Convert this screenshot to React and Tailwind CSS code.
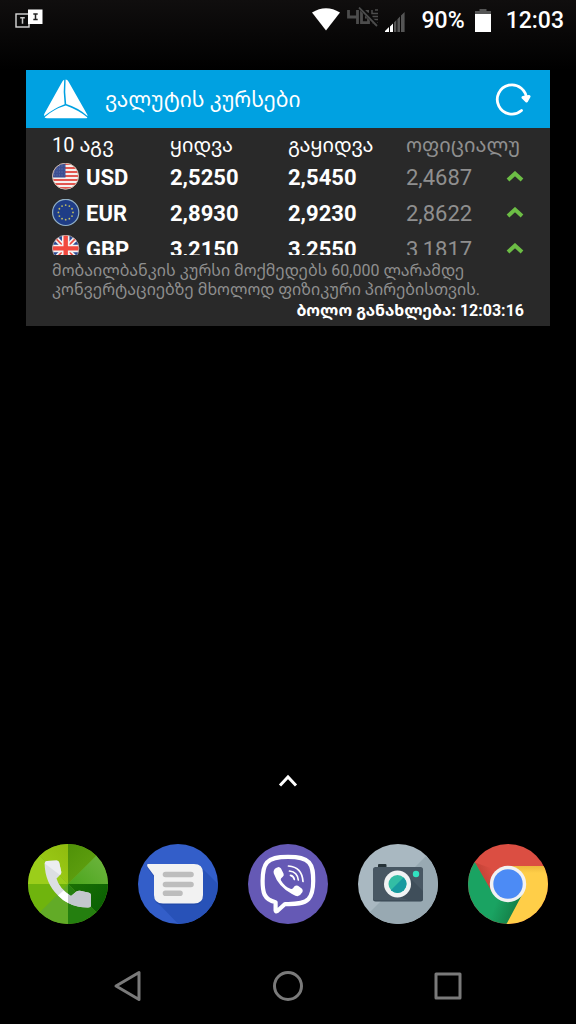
const rates = [
  { code: "USD", Flag: UsFlag, buy: "2,5250", sell: "2,5450", official: "2,4687" },
  { code: "EUR", Flag: EuFlag, buy: "2,8930", sell: "2,9230", official: "2,8622" },
  { code: "GBP", Flag: GbFlag, buy: "3,2150", sell: "3,2550", official: "3,1817" },
];

function UsFlag() {
  return (
    <svg className="size-7 shrink-0" viewBox="0 0 28 28" aria-hidden="true">
      <clipPath id="us"><circle cx="13.5" cy="13.2" r="13" /></clipPath>
      <g clipPath="url(#us)">
        <rect width="28" height="28" fill="#f5f0ee" />
        {[1, 5, 9, 13, 17, 21, 25].map((y) => (
          <rect key={y} y={y - 1} width="28" height="2" fill="#e2564f" />
        ))}
        <rect width="13.5" height="14.5" fill="#3c4f93" />
        {[3, 6, 9, 12].map((y) => (
          <path key={y} d={`M2 ${y}H12.5`} stroke="#6f7fb4" strokeWidth="0.8" strokeDasharray="1 1.5" />
        ))}
      </g>
      <circle cx="13.5" cy="13.2" r="13" fill="none" stroke="#c9b5a8" strokeWidth="1" />
    </svg>
  );
}

function EuFlag() {
  return (
    <svg className="size-7 shrink-0" viewBox="0 0 28 28" aria-hidden="true">
      <circle cx="13.7" cy="13.4" r="13.1" fill="#1f3d86" stroke="#92b1c6" strokeWidth="1.2" />
      {Array.from({ length: 12 }, (_, i) => {
        const a = (i * Math.PI) / 6;
        return <circle key={i} cx={13.7 + 7.3 * Math.cos(a)} cy={13.4 + 7.3 * Math.sin(a)} r="0.9" fill="#c3bf62" />;
      })}
    </svg>
  );
}

function GbFlag() {
  return (
    <svg className="size-7 shrink-0" viewBox="0 0 28 28" aria-hidden="true">
      <clipPath id="gb"><circle cx="13.7" cy="13.4" r="13.2" /></clipPath>
      <g clipPath="url(#gb)">
        <rect width="28" height="28" fill="#2b4a96" />
        <path d="M1.7 1.4L25.7 25.4M25.7 1.4L1.7 25.4" stroke="#f5f2f2" strokeWidth="5" />
        <path d="M1.7 1.4L25.7 25.4M25.7 1.4L1.7 25.4" stroke="#ee4a40" strokeWidth="1.6" />
        <path d="M13.7 0V28M0 13.4H28" stroke="#f5f2f2" strokeWidth="7.5" />
        <path d="M13.7 0V28M0 13.4H28" stroke="#f2493f" strokeWidth="4.4" />
      </g>
      <circle cx="13.7" cy="13.4" r="13.2" fill="none" stroke="#b9a8a4" strokeWidth="0.8" />
    </svg>
  );
}

function StatusBar() {
  return (
    <header className="flex h-10 items-center pt-0.5 pl-[15px] pr-3 text-[23px] font-medium">
      <svg className="mb-1 h-5 w-7" viewBox="0 0 28 20" aria-hidden="true">
        <rect x="1" y="5" width="13" height="13" fill="#0a0a0a" stroke="#d8d8d8" strokeWidth="1.4" />
        <path d="M5.2 8.7H9.8M7.5 8.7V14.7" stroke="#c4c4c4" strokeWidth="1.5" fill="none" />
        <rect x="13" y="0.5" width="14.5" height="14.5" fill="#fff" />
        <path d="M18.3 5H22.7M18.3 10.5H22.7M20.5 5V10.5" stroke="#222" strokeWidth="1.5" fill="none" />
      </svg>
      <svg className="ml-auto mb-1 h-6 w-[30px]" viewBox="0 0 30 24" aria-hidden="true">
        <path d="M1 5.5Q15 -3 29 5.5L15 23.5Z" fill="#fff" />
      </svg>
      <svg className="ml-1.5 mr-1.5 mb-2 h-5 w-8" viewBox="0 0 32 20" aria-hidden="true">
        <g fill="none" stroke="#4c4c4c">
          <path d="M1.5 3V10H10.5M10.5 3V17" strokeWidth="2.8" />
          <path d="M22 4.3H14.5V15.7H21.5V10H18" strokeWidth="2.8" />
          <path d="M25 3V6.5H31M31 9.5H25.5M31 12.5H25.5M31 16H25.5M28 3H31" strokeWidth="1.5" />
          <path d="M12.5 0L31 19" stroke="#0b0b0b" strokeWidth="4" />
          <path d="M12 0.5L30 19" strokeWidth="1.8" />
        </g>
      </svg>
      <svg className="mt-0.5 h-5 w-5" viewBox="0 0 20 20" aria-hidden="true">
        <path d="M0 20V19L4 15V20ZM5 20V14.5L8 11.5V20Z" fill="#fff" />
        <path d="M9 20V10.5L11.4 8V20ZM12.4 20V7.2L15 4.6V20ZM16 20V3.6L19.6 0V20Z" fill="#555" />
      </svg>
      <span className="ml-[17px]">90%</span>
      <svg className="ml-2.5 h-6 w-4" viewBox="0 0 16 24" aria-hidden="true">
        <path d="M4.5 0H11.5V2H16V6H0V2H4.5Z" fill="#555" />
        <rect y="5" width="16" height="18" fill="#fff" />
      </svg>
      <time className="ml-[15px]">12:03</time>
    </header>
  );
}

function RatesWidget() {
  return (
    <section className="mx-[26px] mt-[30px] bg-[#292929]">
      <div className="flex h-[58px] items-center bg-[#00a1e1] pl-[17px] pr-[19px]">
        <svg className="h-10 w-[46px]" viewBox="0 0 46 40" fill="#fff" aria-hidden="true">
          <path d="M21.2 0.8Q20 1.2 19.2 2.8L1.5 34.5Q0.6 36.2 1.3 37Q11 29.5 21.6 25.3Q20 13 21.2 0.8Z" />
          <path d="M22.6 0.6Q24.4 0.6 25.6 2.8L44.2 35.5Q44.8 36.6 44.4 37Q36 29 23.2 25Q21.6 13 22.6 0.6Z" />
          <path d="M22.8 26.6Q11 30 1.6 38.2Q2 39.3 4 39.3H42Q44 39.3 44.4 38.4Q35 31 22.8 26.6Z" />
        </svg>
        <h1 className="ml-4 pt-1 text-[21px]">ვალუტის კურსები</h1>
        <button type="button" aria-label="განახლება" className="ml-auto">
          <svg className="size-9" viewBox="0 0 36 36" fill="none" stroke="#fff" strokeLinecap="round" strokeLinejoin="round">
            <path d="M26.5 29.5A14.6 14.6 0 1 1 31.5 19" strokeWidth="2.8" />
            <path d="M28 16.5L31.5 20L34 15.5Z" strokeWidth="3" fill="#fff" />
          </svg>
        </button>
      </div>

      <div className="px-[26px] pb-[5px]">
        {/* Third row is cut off by the widget height */}
        <div className="h-[127px] overflow-hidden">
          <table className="w-full table-fixed text-left text-[22px]">
            <colgroup>
              <col className="w-1/4" />
              <col className="w-1/4" />
              <col className="w-1/4" />
              <col />
              <col className="w-[18px]" />
            </colgroup>
            <thead>
              <tr className="h-[31px] whitespace-nowrap text-[20px] leading-[27px]">
                <th className="p-0 pt-1 font-normal">10 აგვ</th>
                <th className="p-0 pt-1 font-normal">ყიდვა</th>
                <th className="p-0 pt-1 font-normal">გაყიდვა</th>
                <th colSpan={2} className="p-0 pt-1 font-normal text-[#8f8f8f]">ოფიციალუ</th>
              </tr>
            </thead>
            <tbody>
              {rates.map(({ code, Flag, buy, sell, official }) => (
                <tr key={code} className="h-9 font-bold">
                  <td className="p-0">
                    <div className="flex items-center gap-1.5">
                      <Flag />
                      {code}
                    </div>
                  </td>
                  <td className="p-0">{buy}</td>
                  <td className="p-0">{sell}</td>
                  <td className="p-0 font-normal text-[#8f8f8f]">{official}</td>
                  <td className="p-0">
                    <svg className="h-3 w-[18px]" viewBox="0 0 18 12" aria-hidden="true">
                      <path d="M2 9L9 2.6L16 9" fill="none" stroke="#6cbd45" strokeWidth="4" />
                    </svg>
                  </td>
                </tr>
              ))}
            </tbody>
          </table>
        </div>
        <p className="mt-[6px] text-base leading-[19px] text-[#8f8f8f]">
          მობაილბანკის კურსი მოქმედებს 60,000 ლარამდე
          <br />
          კონვერტაციებზე მხოლოდ ფიზიკური პირებისთვის.
        </p>
        <p className="mt-[2px] text-right text-base leading-5 font-bold">ბოლო განახლება: 12:03:16</p>
      </div>
    </section>
  );
}

function PhoneIcon() {
  return (
    <svg className="size-20" viewBox="0 0 80 80" aria-hidden="true">
      <defs>
        <clipPath id="phone"><circle cx="40" cy="40" r="40" /></clipPath>
        <linearGradient id="p1" x1="1" y1="0" x2="0" y2="1"><stop stopColor="#8fbb0e" /><stop offset="1" stopColor="#a3d41c" /></linearGradient>
        <linearGradient id="p2" x1="0" y1="0" x2="1" y2="1"><stop stopColor="#4f9108" /><stop offset="1" stopColor="#69a814" /></linearGradient>
        <linearGradient id="p3" x1="0" y1="1" x2="1" y2="0"><stop stopColor="#4aa51c" /><stop offset="1" stopColor="#76b846" /></linearGradient>
        <linearGradient id="p4" x1="0" y1="0" x2="1" y2="1"><stop stopColor="#1b6f05" /><stop offset="1" stopColor="#045c02" /></linearGradient>
      </defs>
      <g clipPath="url(#phone)">
        <rect width="80" height="80" fill="#6aa81c" />
        <path d="M40 40L0 0H40Z" fill="url(#p1)" />
        <path d="M40 40V0H80Z" fill="url(#p2)" />
        <path d="M40 40L80 0V40Z" fill="url(#p3)" />
        <path d="M40 40H80V80Z" fill="url(#p4)" />
        <path d="M40 40L80 80H40Z" fill="#247f0f" />
        <path d="M40 40V80H0Z" fill="#62ab27" />
        <path d="M40 40L0 80V40Z" fill="#6fb40d" />
        <path d="M40 40H0V0Z" fill="#9bce1a" />
      </g>
      <path d="M19 17L28.5 16.5Q30.5 16.5 31.2 18.5L33.3 28Q33.4 30 32 31L28.5 34.5Q31 44 43 52L48.5 47.5Q50 46.5 52 46.8L61 48.8Q63 49.3 63 51.5V61Q63 63.5 60 63.5Q42 63.5 30 51.5Q17 39 16.6 19.5Q16.6 17 19 17Z" fill="#dcdfe3" />
      <path d="M19 17L28.5 16.5Q30.5 16.5 31.2 18.5L33.3 28Q33.4 30 32 31L16.8 19.5Q16.8 17 19 17Z" fill="#eceef1" />
      <path d="M30 51.5L35.5 46.5Q38 48.8 40 50V59Q34 56 30 51.5Z" fill="#fff" />
      <path d="M40 50.2L43 52L48.5 47.5Q50 46.5 52 46.8L61 48.8Q63 49.3 63 51.5V61Q63 63.5 60 63.5Q49 63.5 40 59Z" fill="#c3c7ce" />
    </svg>
  );
}

function MessagesIcon() {
  return (
    <svg className="size-20" viewBox="0 0 80 80" aria-hidden="true">
      <clipPath id="msg"><circle cx="40" cy="40" r="40" /></clipPath>
      <g clipPath="url(#msg)">
        <rect width="80" height="80" fill="#335ec9" />
        <path d="M62 22L90 50V90H50L18 57Z" fill="#2852b8" />
      </g>
      <path d="M10 21.5H56Q65 21.5 65 30V52Q65 61 56 61H25Q16 61 16 52V33L9.5 24Q8.5 21.5 10 21.5Z" fill="#1d43a0" opacity="0.5" />
      <path d="M10 20H56Q65 20 65 29V51Q65 59.5 56 59.5H25Q16 59.5 16 51V31.5L9.5 22.8Q8.5 20 10 20Z" fill="#f2f2f2" />
      <path d="M27.5 30.5H53M27.5 40.5H53M27.5 49.3H42" stroke="#bdbdbd" strokeWidth="5.6" strokeLinecap="round" />
    </svg>
  );
}

function ViberIcon() {
  return (
    <svg className="size-20" viewBox="0 0 80 80" aria-hidden="true">
      <circle cx="40" cy="40" r="40" fill="#6559b5" />
      <path d="M40 12.8C51 12.8 57 14 61 18.5C65 23 65.2 29 65.2 37C65.2 45 64.5 50.5 60.5 55C56 59.8 48 60.3 37 60L29 67.2Q27.8 67.8 27.6 66.5V58.2C22 57 18.5 54.5 16.5 50.5C14.6 46 14.6 42 14.6 37C14.6 29 15 23 19 18.5C23 14 29 12.8 40 12.8Z" fill="none" stroke="#fff" strokeWidth="4.2" strokeLinejoin="round" />
      <path d="M28 24L30.5 23Q32 23 33 24.5L35.5 29.5Q36.3 31.5 35 32.5L33 34.5Q32.5 35.5 33 36.5Q36.5 42.5 42.5 44.8Q44 45.3 45 44.3L46.5 42.3Q48 40.8 50 41.8L54 44.8Q55.2 46 54.5 48Q52.5 51.5 49.5 52.3Q48 52.3 44 50Q30.5 43 25.8 29.5Q24.8 26 28 24Z" fill="#fff" />
      <path d="M40.5 22Q54 23 55 37.5M41.5 27Q49.5 28 50.3 36M42.5 31.3Q45.8 32 46.3 35.5" fill="none" stroke="#fff" strokeWidth="1.7" strokeLinecap="round" />
    </svg>
  );
}

function CameraIcon() {
  return (
    <svg className="size-20" viewBox="0 0 80 80" aria-hidden="true">
      <defs>
        <clipPath id="cam"><circle cx="40" cy="40" r="40" /></clipPath>
        <clipPath id="lens"><circle cx="39.5" cy="40" r="9" /></clipPath>
      </defs>
      <g clipPath="url(#cam)">
        <rect width="80" height="80" fill="#a9b8c1" />
        <path d="M80 0V80H0Z" fill="#98a9b2" />
      </g>
      <path d="M21 20H27.5Q28.5 20 28.5 21V26H20V21Q20 20 21 20Z" fill="#263238" />
      <rect x="15" y="24" width="50" height="33.5" rx="2.5" fill="#354550" />
      <rect x="15" y="23" width="50" height="33.5" rx="2.5" fill="#485763" />
      <path d="M48 30L65 47V54Q65 56.5 62.5 56.5H52L31 50Z" fill="#3f4e5a" />
      <circle cx="39.5" cy="40" r="13.5" fill="#f1f3f4" />
      <g clipPath="url(#lens)">
        <rect x="30" y="30" width="20" height="20" fill="#33bda5" />
        <path d="M50 29V50H29Z" fill="#189aa0" />
      </g>
      <circle cx="58" cy="30" r="3.2" fill="#32e2c0" />
    </svg>
  );
}

function ChromeIcon() {
  return (
    <svg className="size-20" viewBox="0 0 80 80" aria-hidden="true">
      <defs>
        <clipPath id="chrome"><circle cx="40" cy="40" r="40" /></clipPath>
        <linearGradient id="c1" x1="0" y1="0.6" x2="0.8" y2="0.2"><stop stopColor="#b93d31" /><stop offset="1" stopColor="#db4e42" /></linearGradient>
        <linearGradient id="c2" x1="0" y1="0" x2="0" y2="1"><stop stopColor="#ecb83c" /><stop offset="0.12" stopColor="#ffce48" /></linearGradient>
        <linearGradient id="c3" x1="0.95" y1="0.6" x2="0.6" y2="0.45"><stop stopColor="#148048" /><stop offset="1" stopColor="#1aa362" /></linearGradient>
      </defs>
      <g clipPath="url(#chrome)">
        <rect width="80" height="80" fill="#db4e42" />
        <path d="M7 18.5L28 26L22 46Z" fill="url(#c1)" />
        <path d="M40 22H80V80H38L40 40Z" fill="url(#c2)" />
        <path d="M7 18.5L24 48L40 57L54.5 50L38.5 80H0V18.5Z" fill="url(#c3)" />
      </g>
      <circle cx="40" cy="40" r="18.2" fill="#f2f2f2" />
      <circle cx="40" cy="40" r="14.7" fill="#4c8bf5" />
    </svg>
  );
}

const apps = [
  { name: "Phone", Icon: PhoneIcon },
  { name: "Messages", Icon: MessagesIcon },
  { name: "Viber", Icon: ViberIcon },
  { name: "Camera", Icon: CameraIcon },
  { name: "Chrome", Icon: ChromeIcon },
];

const navButtons = [
  { name: "Back", shape: <path d="M28 3.5V30.5L5 17Z" /> },
  { name: "Home", shape: <circle cx="17" cy="17" r="13.5" /> },
  { name: "Recent apps", shape: <rect x="5" y="5" width="24" height="24" /> },
];

export default function App() {
  return (
    <div className="flex min-h-screen flex-col bg-black bg-[linear-gradient(#100e0e,#000_70px)] font-[Roboto,'Noto_Sans_Georgian','Noto_Sans','DejaVu_Sans',sans-serif] text-white">
      <StatusBar />
      <RatesWidget />

      <button type="button" aria-label="All apps" className="mx-auto mt-auto">
        <svg className="h-6 w-6" viewBox="0 0 24 24" aria-hidden="true">
          <path d="M4 17.5L12 9L20 17.5" fill="none" stroke="#fff" strokeWidth="3" />
        </svg>
      </button>

      <div className="mt-[52px] flex justify-between px-7">
        {apps.map(({ name, Icon }) => (
          <button key={name} type="button" aria-label={name}>
            <Icon />
          </button>
        ))}
      </div>

      <nav className="mt-6 grid h-[76px] grid-cols-3 px-12">
        {navButtons.map(({ name, shape }) => (
          <button key={name} type="button" aria-label={name} className="flex items-center justify-center">
            <svg className="size-[34px]" viewBox="0 0 34 34" fill="none" stroke="#7a7a7a" strokeWidth="3" strokeLinejoin="round">
              {shape}
            </svg>
          </button>
        ))}
      </nav>
    </div>
  );
}
